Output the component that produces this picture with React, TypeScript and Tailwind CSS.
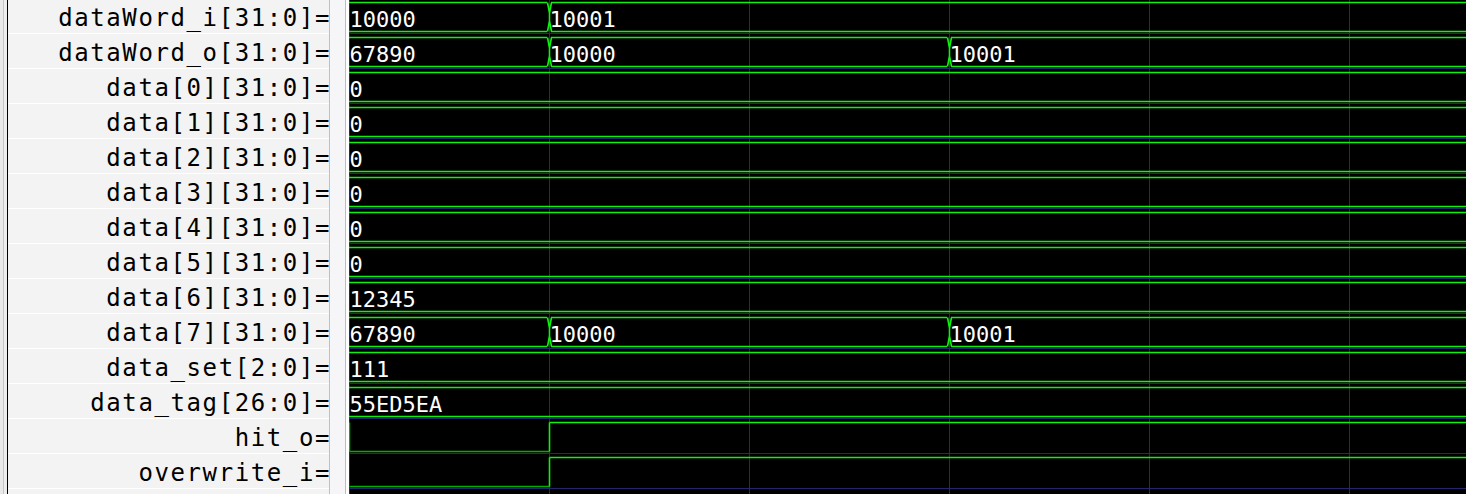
import React from "react";

type Seg = [number, string];
type Row =
  | { name: string; kind: "bus"; segs: Seg[] }
  | { name: string; kind: "bit"; edges: [number, 0 | 1][] };

const W = 1117;
const ROW = 35;
const GRID = "#26266e";
const HIGH = "#10f010";
const LOW = "#00b000";

const rows: Row[] = [
  { name: "dataWord_i[31:0]=", kind: "bus", segs: [[0, "10000"], [200, "10001"]] },
  { name: "dataWord_o[31:0]=", kind: "bus", segs: [[0, "67890"], [200, "10000"], [600, "10001"]] },
  { name: "data[0][31:0]=", kind: "bus", segs: [[0, "0"]] },
  { name: "data[1][31:0]=", kind: "bus", segs: [[0, "0"]] },
  { name: "data[2][31:0]=", kind: "bus", segs: [[0, "0"]] },
  { name: "data[3][31:0]=", kind: "bus", segs: [[0, "0"]] },
  { name: "data[4][31:0]=", kind: "bus", segs: [[0, "0"]] },
  { name: "data[5][31:0]=", kind: "bus", segs: [[0, "0"]] },
  { name: "data[6][31:0]=", kind: "bus", segs: [[0, "12345"]] },
  { name: "data[7][31:0]=", kind: "bus", segs: [[0, "67890"], [200, "10000"], [600, "10001"]] },
  { name: "data_set[2:0]=", kind: "bus", segs: [[0, "111"]] },
  { name: "data_tag[26:0]=", kind: "bus", segs: [[0, "55ED5EA"]] },
  { name: "hit_o=", kind: "bit", edges: [[0, 0], [200, 1]] },
  { name: "overwrite_i=", kind: "bit", edges: [[0, 0], [200, 1]] },
];

function BusRow({ i, segs }: { i: number; segs: Seg[] }) {
  const top = ROW * i + 2.5;
  const bot = ROW * i + 31.5;
  const mid = (top + bot) / 2;
  const lines: React.ReactNode[] = [];
  segs.forEach(([x0, label], k) => {
    const next = segs[k + 1];
    const a = k > 0 ? x0 + 2 : x0;
    const b = next ? next[0] - 2 : W + 10;
    lines.push(
      <path
        key={`l${k}`}
        d={`M${a} ${top}H${b}M${a} ${bot}H${b}`}
        stroke={HIGH}
        strokeWidth={1.6}
        fill="none"
      />
    );
    if (next) {
      const x = next[0] + 0.5;
      lines.push(
        <path
          key={`x${k}`}
          d={`M${x - 2} ${top}L${x} ${mid - 4}V${mid + 4}L${x - 2} ${bot}M${x + 2} ${top}L${x} ${mid - 4}M${x + 2} ${bot}L${x} ${mid + 4}`}
          stroke={HIGH}
          strokeWidth={1.6}
          fill="none"
        />
      );
    }
    lines.push(
      <text
        key={`t${k}`}
        x={x0 + 0.5}
        y={ROW * i + 26.5}
        fill="#ffffff"
        fontSize={22}
        fontFamily="'DejaVu Sans Mono', monospace"
      >
        {label}
      </text>
    );
  });
  return <g>{lines}</g>;
}

function BitRow({ i, edges }: { i: number; edges: [number, 0 | 1][] }) {
  const hi = ROW * i + 2.5;
  const lo = ROW * i + 31.5;
  const out: React.ReactNode[] = [];
  edges.forEach(([x0, v], k) => {
    const next = edges[k + 1];
    const x1 = next ? next[0] + 0.5 : W + 10;
    const y = v ? hi : lo;
    out.push(
      <path key={`h${k}`} d={`M${x0 + 0.5} ${y}H${x1}`} stroke={v ? HIGH : LOW} strokeWidth={1.6} fill="none" />
    );
    if (next) {
      out.push(<path key={`v${k}`} d={`M${x1} ${lo}V${hi}`} stroke={HIGH} strokeWidth={1.6} fill="none" />);
    }
  });
  if (i === 12) {
    out.push(<path key="start" d={`M0.5 ${lo}V${hi}`} stroke={LOW} strokeWidth={1.6} fill="none" />);
  }
  return <g>{out}</g>;
}

function Waves() {
  return (
    <svg width={W} height={494} className="block">
      <rect width={W} height={494} fill="#000000" />
      {[0, 200, 400, 600, 800, 1000].map((x) => (
        <path key={x} d={`M${x + 0.5} 0V494`} stroke={GRID} strokeWidth={1} />
      ))}
      {rows.map((_, i) => (
        <path key={i} d={`M0 ${ROW * i + 33.5}H${W}`} stroke={GRID} strokeWidth={1} />
      ))}
      {rows.map((r, i) =>
        r.kind === "bus" ? <BusRow key={i} i={i} segs={r.segs} /> : <BitRow key={i} i={i} edges={r.edges} />
      )}
    </svg>
  );
}

export default function App() {
  return (
    <div className="flex h-[494px] w-[1466px] overflow-hidden bg-[#f3f3f3]">
      <div className="flex w-[8px] shrink-0">
        <div className="w-[3px] bg-[#e9e9e9]" />
        <div className="w-px bg-[#c6c6c6]" />
        <div className="w-[3px] bg-[#ededed]" />
        <div className="w-px bg-black" />
      </div>
      <div className="w-[321px] shrink-0 bg-[#f3f3f3]">
        <div className="-mt-px">
          {rows.map((r) => (
            <div
              key={r.name}
              className="h-[35px] border-b border-white pt-[5px] text-right font-['DejaVu_Sans_Mono',monospace] text-[24px] leading-[normal] tracking-[1.6px] text-black whitespace-pre"
            >
              <span className="-mr-[2px]">{r.name}</span>
            </div>
          ))}
        </div>
      </div>
      <div className="flex w-[20px] shrink-0">
        <div className="w-px bg-[#c0c0c0]" />
        <div className="w-[15px] bg-[#f6f6f8]" />
        <div className="w-px bg-[#bdbdbd]" />
        <div className="w-[3px] bg-white" />
      </div>
      <div className="flex-1">
        <Waves />
      </div>
    </div>
  );
}
